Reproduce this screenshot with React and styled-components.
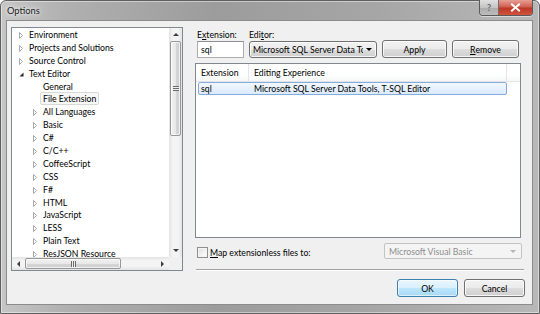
import React from 'react'
import styled, { createGlobalStyle } from 'styled-components'

const Global = createGlobalStyle`
  html, body { margin: 0; padding: 0; background: #fff; }
  body { font-family: Lato, "Noto Sans", sans-serif; font-size: 8.7px; color: #000; }
  * { box-sizing: border-box; }
`

const treeItems = [
  { label: 'Environment', level: 0, arrow: 'closed' },
  { label: 'Projects and Solutions', level: 0, arrow: 'closed' },
  { label: 'Source Control', level: 0, arrow: 'closed' },
  { label: 'Text Editor', level: 0, arrow: 'open' },
  { label: 'General', level: 1 },
  { label: 'File Extension', level: 1, selected: true },
  { label: 'All Languages', level: 1, arrow: 'closed' },
  { label: 'Basic', level: 1, arrow: 'closed' },
  { label: 'C#', level: 1, arrow: 'closed' },
  { label: 'C/C++', level: 1, arrow: 'closed' },
  { label: 'CoffeeScript', level: 1, arrow: 'closed' },
  { label: 'CSS', level: 1, arrow: 'closed' },
  { label: 'F#', level: 1, arrow: 'closed' },
  { label: 'HTML', level: 1, arrow: 'closed' },
  { label: 'JavaScript', level: 1, arrow: 'closed' },
  { label: 'LESS', level: 1, arrow: 'closed' },
  { label: 'Plain Text', level: 1, arrow: 'closed' },
  { label: 'ResJSON Resource', level: 1, arrow: 'closed' },
]

const Arrow = ({ type }) => {
  if (type === 'open') {
    return (
      <svg width="5" height="5" viewBox="0 0 5 5">
        <polygon points="4.5,0.5 4.5,4.5 0.5,4.5" fill="#262626" />
      </svg>
    )
  }
  if (type === 'closed') {
    return (
      <svg width="4" height="7" viewBox="0 0 4 7">
        <polygon points="0.5,0.5 3.5,3.5 0.5,6.5" fill="#fff" stroke="#a9a9a9" strokeWidth="1" />
      </svg>
    )
  }
  return null
}

const Tri = ({ dir, color = '#3c3c3c' }) => {
  const pts = {
    up: '0,3 3,0 6,3',
    down: '0,0 3,3 6,0',
    left: '3,0 0,3 3,6',
    right: '0,0 3,3 0,6',
  }[dir]
  const horiz = dir === 'left' || dir === 'right'
  return (
    <svg width={horiz ? 3 : 6} height={horiz ? 6 : 3} viewBox={horiz ? '0 0 3 6' : '0 0 6 3'}>
      <polygon points={pts} fill={color} />
    </svg>
  )
}

const ScrollBar = ({ vertical, thumbSize }) => (
  <S_Bar $vertical={vertical}>
    <S_BarArrow $vertical={vertical}><Tri dir={vertical ? 'up' : 'left'} /></S_BarArrow>
    <S_Thumb $vertical={vertical} style={{ flexBasis: thumbSize }}>
      <S_Grip $vertical={vertical} />
    </S_Thumb>
    <S_BarSpace />
    <S_BarArrow $vertical={vertical}><Tri dir={vertical ? 'down' : 'right'} /></S_BarArrow>
  </S_Bar>
)

const App = () => {
  return (
    <>
      <Global />
      <S_Window>
        <S_TitleBar>
          <S_Title>Options</S_Title>
          <S_Caption>
            <S_HelpBtn>?</S_HelpBtn>
            <S_CloseBtn>
              <svg width="11" height="9" viewBox="0 0 11 9">
                <path d="M2 1.5 L9 7.5 M9 1.5 L2 7.5" stroke="#fff" strokeWidth="2" strokeLinecap="square" />
              </svg>
            </S_CloseBtn>
          </S_Caption>
        </S_TitleBar>

        <S_Client>
          <S_Main>
            <S_Tree>
              <S_TreeItems>
                {treeItems.map((it) => (
                  <S_TreeRow key={it.label} $level={it.level}>
                    <S_ArrowCell><Arrow type={it.arrow} /></S_ArrowCell>
                    <S_TreeLabel $selected={it.selected}>{it.label}</S_TreeLabel>
                  </S_TreeRow>
                ))}
              </S_TreeItems>
              <ScrollBar vertical thumbSize={95} />
              <ScrollBar thumbSize={96} />
              <S_Corner />
            </S_Tree>

            <S_Right>
              <S_TopGrid>
                <S_Label>E<u>x</u>tension:</S_Label>
                <S_Label>Edi<u>t</u>or:</S_Label>
                <span />
                <span />
                <S_TextBox>sql</S_TextBox>
                <S_Combo>
                  <S_ComboText>Microsoft SQL Server Data Tools, T-SQL Editor</S_ComboText>
                  <Tri dir="down" color="#000" />
                </S_Combo>
                <S_Button>Apply</S_Button>
                <S_Button><u>R</u>emove</S_Button>
              </S_TopGrid>

              <S_List>
                <S_Header>
                  <S_HeadCell $w={53}>Extension</S_HeadCell>
                  <S_HeadCell $w={258}>Editing Experience</S_HeadCell>
                  <S_HeadCell $w={0} />
                </S_Header>
                <S_ListRow>
                  <S_RowCell $w={53}>sql</S_RowCell>
                  <S_RowCell>Microsoft SQL Server Data Tools, T-SQL Editor</S_RowCell>
                </S_ListRow>
              </S_List>

              <S_MapRow>
                <S_Check>
                  <S_CheckBox />
                  <span><u>M</u>ap extensionless files to:</span>
                </S_Check>
                <S_DisabledCombo>
                  <span>Microsoft Visual Basic</span>
                  <Tri dir="down" color="#b4b4b4" />
                </S_DisabledCombo>
              </S_MapRow>

              <S_Separator />
            </S_Right>
          </S_Main>

          <S_Footer>
            <S_Button $default>OK</S_Button>
            <S_Button>Cancel</S_Button>
          </S_Footer>
        </S_Client>
      </S_Window>
    </>
  )
}

const S_Window = styled.div`
  width: 540px;
  height: 314px;
  display: flex;
  flex-direction: column;
  padding: 0 6px 8px 5px;
  border: 1px solid #5f5f5f;
  border-radius: 6px 6px 0 0;
  background: linear-gradient(90deg, #c6c6c6 0%, #b0b0b0 12%, #9c9c9c 40%, #a6a6a6 70%, #b8b8b8 100%);
  box-shadow: inset 0 0 0 1px rgba(255, 255, 255, 0.45);
`

const S_TitleBar = styled.div`
  height: 19px;
  display: flex;
  justify-content: space-between;
  align-items: flex-start;
`

const S_Title = styled.div`
  margin: 4px 0 0 1px;
  font-size: 9.3px;
  color: #1a1a1a;
  text-shadow: 0 0 6px rgba(255, 255, 255, 0.9), 0 0 3px rgba(255, 255, 255, 0.9);
`

const S_Caption = styled.div`
  display: flex;
  margin-top: -1px;
  border: 1px solid #5a5a5a;
  border-top: none;
  border-radius: 0 0 4px 4px;
  overflow: hidden;
  box-shadow: 0 1px 0 rgba(255, 255, 255, 0.5);
`

const S_HelpBtn = styled.div`
  width: 19px;
  height: 15px;
  display: flex;
  align-items: center;
  justify-content: center;
  font-size: 9px;
  font-weight: bold;
  color: #666;
  background: linear-gradient(180deg, #e0e0e0 0%, #c4c4c4 50%, #acacac 51%, #bdbdbd 100%);
  border-right: 1px solid #6c6c6c;
`

const S_CloseBtn = styled.div`
  width: 33px;
  height: 15px;
  display: flex;
  align-items: center;
  justify-content: center;
  background: linear-gradient(180deg, #e6a093 0%, #cf5d4e 48%, #be3524 52%, #d0553f 100%);
`

const S_Client = styled.div`
  flex: 1;
  display: flex;
  flex-direction: column;
  padding: 6px 7px 6px 4px;
  background: #f0f0f0;
  border: 1px solid #8c8c8c;
`

const S_Main = styled.div`
  height: 243px;
  display: grid;
  grid-template-columns: 172px 1fr;
  column-gap: 12px;
`

const S_Tree = styled.div`
  display: grid;
  grid-template-columns: 1fr 13px;
  grid-template-rows: 1fr 13px;
  border: 1px solid #828790;
  background: #fff;
  overflow: hidden;
`

const S_TreeItems = styled.div`
  overflow: hidden;
`

const S_TreeRow = styled.div`
  height: 12.9px;
  display: flex;
  align-items: center;
  padding-left: ${(p) => 4 + p.$level * 14}px;
  white-space: nowrap;
`

const S_ArrowCell = styled.div`
  width: 10px;
  height: 100%;
  display: flex;
  align-items: center;
  justify-content: center;
  padding-top: 2px;
`

const S_TreeLabel = styled.span`
  padding: 0 2px;
  line-height: 11px;
  border: 1px solid ${(p) => (p.$selected ? '#d9d9d9' : 'transparent')};
  background: ${(p) => (p.$selected ? '#f7f7f7' : 'transparent')};
  border-radius: 2px;
`

const S_Bar = styled.div`
  display: flex;
  flex-direction: ${(p) => (p.$vertical ? 'column' : 'row')};
  background: ${(p) =>
    p.$vertical
      ? 'linear-gradient(90deg, #e4e4e4, #f4f4f4 30%, #f4f4f4 70%, #e4e4e4)'
      : 'linear-gradient(180deg, #e4e4e4, #f4f4f4 30%, #f4f4f4 70%, #e4e4e4)'};
`

const S_BarArrow = styled.div`
  flex: 0 0 13px;
  display: flex;
  align-items: center;
  justify-content: center;
`

const S_BarSpace = styled.div`
  flex: 1;
`

const S_Thumb = styled.div`
  flex-shrink: 0;
  display: flex;
  align-items: center;
  justify-content: center;
  margin: ${(p) => (p.$vertical ? '0 1px' : '1px 0')};
  border: 1px solid #979797;
  border-radius: 2px;
  background: ${(p) =>
    p.$vertical
      ? 'linear-gradient(90deg, #f2f2f2, #e8e8e8 50%, #d6d6d6 51%, #cfcfcf)'
      : 'linear-gradient(180deg, #f2f2f2, #e8e8e8 50%, #d6d6d6 51%, #cfcfcf)'};
  box-shadow: inset 0 0 0 1px rgba(255, 255, 255, 0.7);
`

const S_Grip = styled.div`
  width: ${(p) => (p.$vertical ? '6px' : '5px')};
  height: ${(p) => (p.$vertical ? '5px' : '6px')};
  background: ${(p) =>
    p.$vertical
      ? 'repeating-linear-gradient(180deg, #6a6a6a 0 1px, #f0f0f0 1px 2px)'
      : 'repeating-linear-gradient(90deg, #6a6a6a 0 1px, #f0f0f0 1px 2px)'};
`

const S_Corner = styled.div`
  background: #f0f0f0;
`

const S_Right = styled.div`
  display: flex;
  flex-direction: column;
`

const S_TopGrid = styled.div`
  display: grid;
  grid-template-columns: 47px 128px 65px 67px;
  grid-template-rows: 13px 18px;
  column-gap: 5px;
  padding-left: 2px;
  align-items: center;
`

const S_Label = styled.span`
  line-height: 13px;
  white-space: nowrap;
  padding-top: 1px;
`

const S_TextBox = styled.div`
  height: 17px;
  display: flex;
  align-items: center;
  padding-left: 3px;
  background: #fff;
  border: 1px solid #abadb3;
  border-top-color: #8c8f94;
`

const S_Combo = styled.div`
  height: 17px;
  display: flex;
  align-items: center;
  gap: 3px;
  padding: 0 4px 0 3px;
  border: 1px solid #707070;
  border-radius: 3px;
  background: linear-gradient(180deg, #f2f2f2 0%, #ebebeb 50%, #dddddd 51%, #cfcfcf 100%);
  box-shadow: inset 0 0 0 1px rgba(255, 255, 255, 0.8);
`

const S_ComboText = styled.span`
  flex: 1;
  overflow: hidden;
  white-space: nowrap;
`

const S_Button = styled.div`
  height: 18px;
  display: flex;
  align-items: center;
  justify-content: center;
  border: 1px solid ${(p) => (p.$default ? '#3c7fb1' : '#707070')};
  border-radius: 3px;
  background: ${(p) =>
    p.$default
      ? 'linear-gradient(180deg, #eaf6fd 0%, #d9f0fc 50%, #bee6fd 51%, #a7d9f5 100%)'
      : 'linear-gradient(180deg, #f2f2f2 0%, #ebebeb 50%, #dddddd 51%, #cfcfcf 100%)'};
  box-shadow: inset 0 0 0 1px ${(p) => (p.$default ? 'rgba(255,255,255,0.6)' : 'rgba(255,255,255,0.8)')};
  white-space: nowrap;
`

const S_List = styled.div`
  margin-top: 5px;
  width: 326px;
  height: 175px;
  border: 1px solid #828790;
  background: #fff;
`

const S_Header = styled.div`
  height: 18px;
  display: flex;
  background: linear-gradient(180deg, #ffffff 0%, #ffffff 60%, #f6f7f8 100%);
  border-bottom: 1px solid #e5e5e5;
`

const S_HeadCell = styled.div`
  flex: ${(p) => (p.$w ? `0 0 ${p.$w}px` : '1')};
  display: flex;
  align-items: center;
  padding-left: 5px;
  border-right: ${(p) => (p.$w ? '1px solid #e5e5e5' : 'none')};
  white-space: nowrap;
`

const S_ListRow = styled.div`
  width: 309px;
  height: 13px;
  margin: 0 0 0 2px;
  display: flex;
  align-items: center;
  padding-left: 2px;
  border: 1px solid #84acdd;
  border-radius: 2px;
  background: linear-gradient(180deg, #f2f8fe 0%, #dbeafc 100%);
`

const S_RowCell = styled.span`
  flex: ${(p) => (p.$w ? `0 0 ${p.$w}px` : '1')};
  white-space: nowrap;
  line-height: 11px;
`

const S_MapRow = styled.div`
  margin-top: 5px;
  height: 16px;
  display: flex;
  align-items: center;
  justify-content: space-between;
  padding: 0 3px 0 2px;
`

const S_Check = styled.label`
  display: flex;
  align-items: center;
  gap: 2px;
  padding-top: 3px;
`

const S_CheckBox = styled.span`
  width: 11px;
  height: 11px;
  border: 1px solid #8e8f8f;
  background: linear-gradient(135deg, #dcdcdc 0%, #f4f4f4 60%, #ffffff 100%);
  box-shadow: inset 0 0 0 1px #f4f4f4;
`

const S_DisabledCombo = styled.div`
  width: 138px;
  height: 16px;
  display: flex;
  align-items: center;
  justify-content: space-between;
  padding: 0 5px 0 4px;
  color: #8d8d8d;
  border: 1px solid #c3c3c3;
  border-radius: 2px;
  background: #f4f4f4;
`

const S_Separator = styled.div`
  margin: 10px 1px 0 1px;
  height: 2px;
  border-top: 1px solid #a0a0a0;
  border-bottom: 1px solid #ffffff;
`

const S_Footer = styled.div`
  margin-top: 9px;
  display: flex;
  justify-content: flex-end;
  gap: 6px;

  & > div {
    width: 61px;
  }
`

export default App
